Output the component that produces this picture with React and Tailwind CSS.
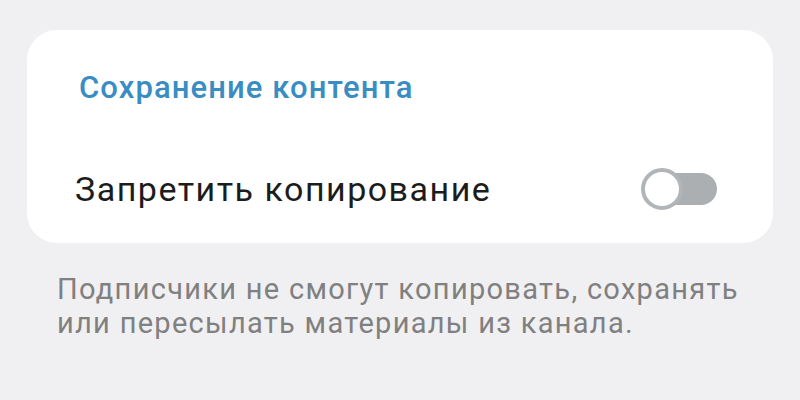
import { useState } from 'react';

const Toggle = ({ checked, onChange }) => (
  <button
    type="button"
    onClick={() => onChange(!checked)}
    className="relative flex h-[42px] w-[76px] items-center"
  >
    <span className="absolute left-[20px] right-0 h-[32px] rounded-full bg-[#abafb2]" />
    <span className="relative h-[42px] w-[42px] rounded-full border-[4px] border-[#b1b5b8] bg-white" />
  </button>
);

const App = () => {
  const [noCopy, setNoCopy] = useState(false);

  return (
    <div
      className="h-[400px] w-[800px] bg-[#f0f0f3] px-[27px] pt-[30px]"
      style={{ fontFamily: 'Roboto, "Noto Sans", sans-serif' }}
    >
      <div className="rounded-[30px] bg-white pb-[33px] pl-[52px] pr-[56px] pt-[40px]">
        <h3 className="text-[31px] font-medium leading-[36px] tracking-[1.1px] text-[#3a8dc3]">
          Сохранение контента
        </h3>
        <div className="mt-[62px] flex h-[42px] items-center justify-between">
          <span className="-ml-[4px] text-[34px] leading-[40px] tracking-[1.5px] text-[#1c1c1c]">
            Запретить копирование
          </span>
          <Toggle checked={noCopy} onChange={setNoCopy} />
        </div>
      </div>
      <p className="mt-[29px] pl-[30px] text-[29px] leading-[34px] tracking-[1.3px] text-[#808080]">
        Подписчики не смогут копировать, сохранять
        <br />
        или пересылать материалы из канала.
      </p>
    </div>
  );
};

export default App;
